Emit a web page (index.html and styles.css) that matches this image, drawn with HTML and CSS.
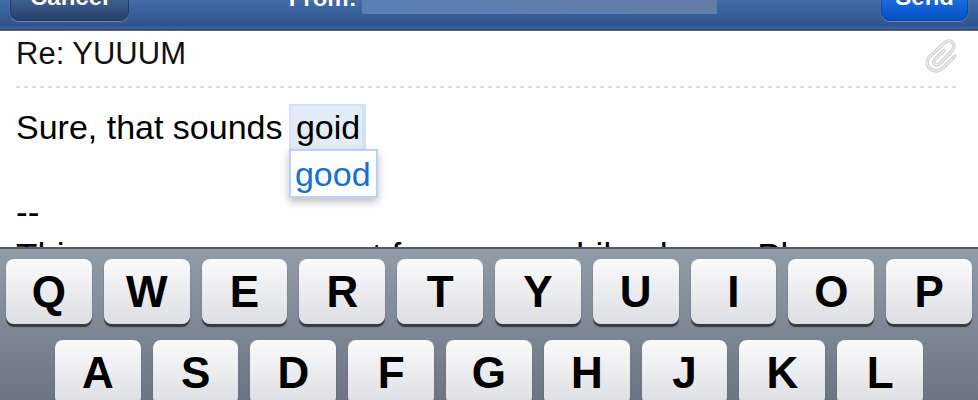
FILE: index.html
```html
<!DOCTYPE html>
<html lang="en">
<head>
    <meta charset="UTF-8">
    <meta name="viewport" content="width=device-width, initial-scale=1.0">
    <title>Re: YUUUM</title>
    <link rel="stylesheet" href="styles.css">
</head>
<body>
    <header class="navbar">
        <button class="nav-btn cancel" type="button">Cancel</button>
        <div class="sender">
            <span>From:</span>
            <span class="address"></span>
        </div>
        <button class="nav-btn send" type="button">Send</button>
    </header>

    <main class="compose">
        <div class="subject-row">
            <input class="subject" type="text" aria-label="Subject" value="Re: YUUUM">
            <button class="attach" type="button" aria-label="Attach file">
                <svg width="34" height="36" viewBox="0 0 34 36" fill="none" stroke-linecap="round" stroke-linejoin="round">
                    <path stroke="#cfcfcf" stroke-width="3.400" d="M31 18 L19 30 C10 38 -1 28 5 19.500 L20 5 C27 -1 33 7 28 13 L16 25.500 C12 29 7.500 25 11 21 L20 12.500"/>
                    <path stroke="#ececec" stroke-width="1.400" d="M31 18 L19 30 C10 38 -1 28 5 19.500 L20 5 C27 -1 33 7 28 13 L16 25.500 C12 29 7.500 25 11 21 L20 12.500"/>
                </svg>
            </button>
        </div>
        <div class="message">
            <p>Sure, that sounds <span class="typo">goid<button class="suggestion" type="button">good</button></span></p>
            <p class="signature">--<br>This message was sent from my mobile phone. Pl</p>
        </div>
    </main>

    <div class="keyboard">
        <div class="key-row">
            <button class="key" type="button">Q</button>
            <button class="key" type="button">W</button>
            <button class="key" type="button">E</button>
            <button class="key" type="button">R</button>
            <button class="key" type="button">T</button>
            <button class="key" type="button">Y</button>
            <button class="key" type="button">U</button>
            <button class="key" type="button">I</button>
            <button class="key" type="button">O</button>
            <button class="key" type="button">P</button>
        </div>
        <div class="key-row inset">
            <button class="key" type="button">A</button>
            <button class="key" type="button">S</button>
            <button class="key" type="button">D</button>
            <button class="key" type="button">F</button>
            <button class="key" type="button">G</button>
            <button class="key" type="button">H</button>
            <button class="key" type="button">J</button>
            <button class="key" type="button">K</button>
            <button class="key" type="button">L</button>
        </div>
    </div>
</body>
</html>
```
FILE: styles.css
```css
* {
    box-sizing: border-box;
}

body {
    display: flex;
    flex-direction: column;
    height: 100vh;
    margin: 0;
    overflow: hidden;
    background-color: #fff;
    color: #000;
    font-family: "Liberation Sans", Arial, sans-serif;
}

button,
input {
    font-family: inherit;
}

/* top bar, scrolled partly out of view */
.navbar {
    display: flex;
    flex: none;
    align-items: flex-end;
    justify-content: space-between;
    height: 31px;
    padding: 0 10px 10px;
    overflow: hidden;
    background: linear-gradient(#426ea8, #2f528c 26px, #3460ae 27px, #3460ae 29px, #26394d 29px, #6f7672);
}

.nav-btn {
    padding: 12px 19px 9px;
    border: 1px solid #223a63;
    border-radius: 9px;
    color: #fff;
    font-size: 24px;
    font-weight: bold;
    line-height: 28px;
    text-shadow: 0 -1px 1px rgba(0, 0, 0, 0.5);
    box-shadow: 0 1px 1px rgba(255, 255, 255, 0.3);
}

.cancel {
    background: linear-gradient(#41628f 28px, #263f6b);
}

.send {
    padding: 12px 13px 9px;
    border-color: #0b48a8;
    background: linear-gradient(#1c6be0 28px, #0551c4);
}

.sender {
    display: flex;
    flex: 1;
    align-items: flex-end;
    gap: 5px;
    margin: 0 164px 7px 160px;
    color: #fff;
    font-size: 24px;
    font-weight: bold;
    line-height: 32px;
    text-shadow: 0 -1px 1px rgba(0, 0, 0, 0.5);
}

.address {
    flex: 1;
    height: 32px;
    background: linear-gradient(90deg, #5c80b5, #647da8);
}

.compose {
    flex: 1;
    min-height: 0;
    padding: 0 16px;
    overflow: hidden;
}

.subject-row {
    display: flex;
    align-items: center;
    justify-content: space-between;
    height: 57px;
    padding-bottom: 12px;
    margin-right: 4px;
    background: repeating-linear-gradient(90deg, #dcdcdc 0, #dcdcdc 4px, transparent 4px, transparent 8px) bottom / 100% 2px no-repeat;
}

.subject {
    flex: 1;
    min-width: 0;
    padding: 0;
    border: none;
    outline: none;
    background: none;
    color: #111;
    font-size: 31px;
    line-height: 36px;
}

.attach {
    display: flex;
    padding: 4px 0 0;
    border: none;
    background: none;
}

.message {
    padding-top: 18px;
    font-size: 34px;
    line-height: 42px;
}

.message p {
    margin: 0 0 42px;
    white-space: nowrap;
}

.message .signature {
    margin: 0;
    font-size: 35px;
    line-height: 44px;
}

.typo {
    position: relative;
    display: inline-block;
    height: 45px;
    margin: -2px 0 -1px -3px;
    padding: 0 2px 0 5px;
    border: 2px solid #d3e0fb;
    border-width: 2px 4px 0 2px;
    background-color: #e3ebf6;
}

.suggestion {
    position: absolute;
    top: 100%;
    left: -2px;
    padding: 2px 5px 1px 4px;
    border: 2px solid #bdd0fb;
    background-color: #fff;
    color: #1670d2;
    font-size: 34px;
    line-height: 42px;
    box-shadow: 0 4px 8px rgba(0, 0, 0, 0.25);
}

.keyboard {
    display: flex;
    flex: none;
    flex-direction: column;
    gap: 16px;
    height: 153px;
    padding-top: 10px;
    overflow: hidden;
    border-top: 2px solid #555b64;
    background: linear-gradient(#929ba8, #6d7584);
}

.key-row {
    display: flex;
    gap: 12px;
    padding: 0 6px;
}

.inset {
    padding: 0 calc(5% + 6px);
}

.key {
    flex: 1;
    min-width: 0;
    height: 65px;
    padding: 0;
    border: none;
    border-radius: 8px;
    background: linear-gradient(#fafafb, #dddee2);
    color: #000;
    font-size: 44px;
    font-weight: bold;
    line-height: 65px;
    box-shadow: 0 3px 1px #343941;
}
```
